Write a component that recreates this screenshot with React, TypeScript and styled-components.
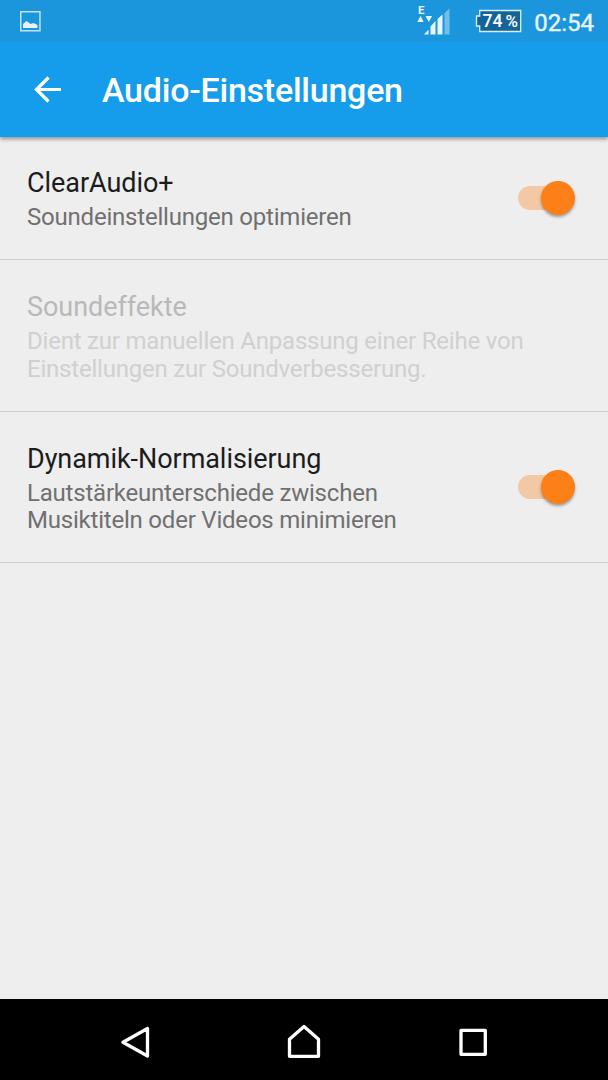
import React from 'react';
import styled, { createGlobalStyle } from 'styled-components';

const Global = createGlobalStyle`
  * { box-sizing: border-box; }
  body { margin: 0; background: #eeeeee; font-family: Roboto, sans-serif; }
`;
const Screen = styled.div`
  width: 608px; height: 1080px; display: flex; flex-direction: column; background: #eeeeee; overflow: hidden;
`;
const StatusBar = styled.div`
  height: 42px; flex: none; background: #1b96dc; display: flex; align-items: center; padding: 0 14px 0 20px; color: #fff;
  position: relative; z-index: 2;
`;
const StatusRight = styled.div`
  margin-left: auto; display: flex; align-items: center;
`;
const Clock = styled.span`
  font-size: 24px; line-height: 28px; margin-left: 12px; padding-top: 3px; color: #e8f4fc; -webkit-text-stroke: 0.4px #e8f4fc;
`;
const AppBar = styled.header`
  height: 95px; flex: none; background: #159dec; display: flex; align-items: center; padding-left: 33px;
  box-shadow: 0 2px 4px rgba(0, 0, 0, 0.4); z-index: 1;
`;
const Title = styled.h1`
  margin: 1px 0 0 40px; font-size: 34px; line-height: 40px; font-weight: 500; letter-spacing: -0.24px; color: #fff; white-space: nowrap;
`;
const Row = styled.section<{ $height: number; $disabled?: boolean }>`
  height: ${(p) => p.$height}px; flex: none; display: flex; align-items: center; justify-content: space-between;
  padding: 0 33px 0 27px; border-bottom: 1px solid #cfcfcf;
  color: ${(p) => (p.$disabled ? '#b9b9b9' : '#1c1c1c')};
`;
const Copy = styled.div`
  padding-top: 3px;
`;
const Label = styled.div`
  font-size: 27px; line-height: 32px; letter-spacing: -0.06px; white-space: nowrap;
`;
const Detail = styled.div<{ $disabled?: boolean }>`
  font-size: 24px; line-height: 27.500px; margin-top: 5px; letter-spacing: -0.21px; white-space: pre;
  color: ${(p) => (p.$disabled ? '#d0d0d0' : '#707070')};
`;
const Track = styled.div`
  width: 50px; height: 24px; border-radius: 12px; background: #f2c9a4; display: flex; align-items: center; justify-content: flex-end; margin-right: 7px;
`;
const Thumb = styled.div`
  width: 34px; height: 34px; flex: none; border-radius: 50%; background: #fd7f17; margin-right: -7px; box-shadow: 0 2px 3px rgba(0, 0, 0, 0.35);
`;
const NavBar = styled.nav`
  height: 81px; flex: none; margin-top: auto; background: #000; display: flex; align-items: center; justify-content: center;
`;

const Switch = () => <Track><Thumb /></Track>;

export default function App() {
  return (
    <Screen>
      <Global />
      <StatusBar>
        <svg width="21" height="22" viewBox="20 10 21 22"><rect x="20.750" y="11.750" width="19.200" height="19" fill="none" stroke="#c4e2f5" strokeWidth="1.500" /><path d="M23 28v-4l3.500-3 4 3 3-1 4 2v3z" fill="#e6f3fc" /></svg>
        <StatusRight>
          <svg width="109" height="42" viewBox="413 0 109 42" fill="#e8f5fd">
            <text x="418" y="14" fontSize="11.500" fontWeight="700">E</text>
            <path d="M417.300 22l3.200-6 3.200 6zM425.500 16h6.600l-3.300 6zM424 34.500l4.500-5v5zM430.500 34.500v-8l5-5.500v13.500zM437.500 34.500v-15.500l5-4.500v20z" />
            <path d="M444.500 34.500V13l5-4.500v26z" opacity=".42" />
            <path d="M479.700 10.500H520.700V31.500H479.700V26H476.500V16H479.700z" fill="#14649a" stroke="#d9effb" strokeWidth="1.300" />
            <text x="482.500" y="27" fontSize="17.500" fontWeight="500" fill="#fff">74</text>
            <text x="505.500" y="27" fontSize="17" fontWeight="500" fill="#fff" textLength="12.500" lengthAdjust="spacingAndGlyphs">%</text>
          </svg>
          <Clock>02:54</Clock>
        </StatusRight>
      </StatusBar>
      <AppBar>
        <svg width="29" height="28" viewBox="0 0 29 28" fill="none" stroke="#fff" strokeWidth="3.200"><path d="M28 13.500H3M15.500 1.500L3.500 13.500l12 12" /></svg>
        <Title>Audio-Einstellungen</Title>
      </AppBar>
      <Row $height={123}>
        <Copy><Label>ClearAudio+</Label><Detail>Soundeinstellungen optimieren</Detail></Copy>
        <Switch />
      </Row>
      <Row $height={152} $disabled>
        <Copy><Label>Soundeffekte</Label><Detail $disabled>{'Dient zur manuellen Anpassung einer Reihe von\nEinstellungen zur Soundverbesserung.'}</Detail></Copy>
      </Row>
      <Row $height={151}>
        <Copy><Label>Dynamik-Normalisierung</Label><Detail>{'Lautstärkeunterschiede zwischen\nMusiktiteln oder Videos minimieren'}</Detail></Copy>
        <Switch />
      </Row>
      <NavBar>
        <svg width="408" height="81" viewBox="100 999 408 81" fill="none" stroke="#fff" strokeWidth="3.300" strokeLinejoin="round">
          <path d="M147.500 1028.500v27.500l-24.500-13.700zM289.500 1056.300v-17l14.500-12.800 14.500 12.800v17zM461 1030.300h24.300v24h-24.300z" />
        </svg>
      </NavBar>
    </Screen>
  );
}
